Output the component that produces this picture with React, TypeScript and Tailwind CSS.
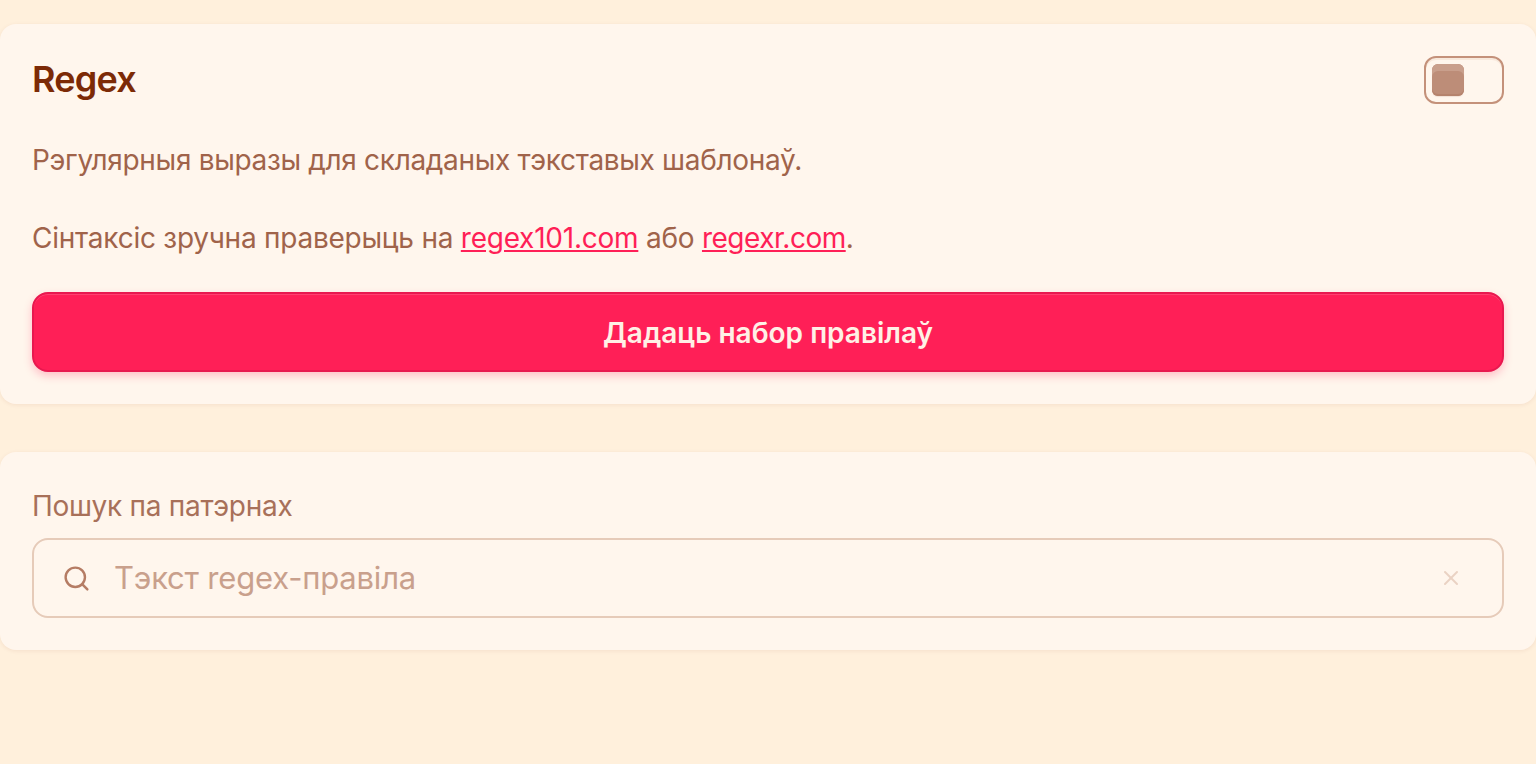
import React from 'react'
import { Search, X } from 'lucide-react'

const font = { fontFamily: 'Inter, sans-serif' }

function RegexCard() {
  return (
    <section className="rounded-2xl bg-[#fff6ed] p-8 shadow-[0_1px_4px_rgba(122,40,0,0.08)]">
      <div className="flex items-center justify-between">
        <h2 className="-mt-px pb-px text-[36px] leading-[48px] font-semibold tracking-[-0.8px] text-[#7c2a06]">Regex</h2>
        {/* toggle */}
        <div className="flex h-12 w-20 items-center rounded-xl border-2 border-[#c4917a] px-1.5 shadow-[inset_0_2px_0_#f8e9dc]">
          <div className="h-8 w-8 rounded-md bg-[#bd8d78] shadow-[inset_0_7px_0_#c99f8c,inset_0_-2px_0_#b5836d,0_1px_1px_rgba(122,40,0,0.1)]" />
        </div>
      </div>
      <p className="mt-[37px] text-[28px] leading-[39px] tracking-[-0.32px] text-[#a0634a]">Рэгулярныя выразы для складаных тэкставых шаблонаў.</p>
      <p className="mt-[39px] text-[28px] leading-[39px] tracking-[-0.24px] text-[#a0634a]">
        Сінтаксіс зручна праверыць на <a href="#" className="text-[#ff1f57] underline">regex101.com</a> або <a href="#" className="tracking-[-0.5px] text-[#ff1f57] underline">regexr.com</a>.
      </p>
      <button className="mt-[34px] block h-20 w-full rounded-2xl border-2 border-[#e8184f] bg-[#ff1f57] pt-0.5 text-[28px] font-semibold text-[#fff0e6] shadow-[inset_0_1px_0_#ff4070,0_4px_8px_rgba(255,31,87,0.25)]">
        Дадаць набор правілаў
      </button>
    </section>
  )
}

function SearchCard() {
  return (
    <section className="mt-12 rounded-2xl bg-[#fff6ed] p-8 shadow-[0_1px_4px_rgba(122,40,0,0.08)]">
      <label className="mt-[3px] block text-[28px] leading-[39px] tracking-[-0.25px] text-[#a87059]">Пошук па патэрнах</label>
      <div className="mt-[12px] flex h-20 items-center rounded-2xl border-2 border-[#e6cbb9] pl-[28px] pr-[39px]">
        <Search className="h-[29px] w-[29px] text-[#b57c64]" strokeWidth={2} />
        <span className="ml-[23px] flex-1 text-[31px] tracking-[-0.2px] text-[#c9a08c]">Тэкст regex-правіла</span>
        <X className="h-6 w-6 text-[#ead2c3]" strokeWidth={2} />
      </div>
    </section>
  )
}

export default function App() {
  return (
    <div style={font} className="h-[764px] overflow-hidden bg-[#fff0dc] pt-6">
      <RegexCard />
      <SearchCard />
    </div>
  )
}
